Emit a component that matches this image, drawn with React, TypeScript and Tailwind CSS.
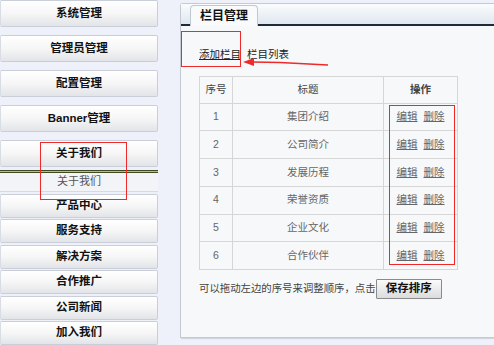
const font = { fontFamily: '"Liberation Sans", "Noto Sans CJK SC", sans-serif' };

const topMenu = ['系统管理', '管理员管理', '配置管理', 'Banner管理', '关于我们'];
const lowerMenu = ['产品中心', '服务支持', '解决方案', '合作推广', '公司新闻', '加入我们'];
const rows = ['集团介绍', '公司简介', '发展历程', '荣誉资质', '企业文化', '合作伙伴'];

function MenuButton({ label, tall }: { label: string; tall?: boolean }) {
  return (
    <div
      className={`flex items-center justify-center rounded-[2px] border border-[#c9ced8] border-l-[#d8dce4] bg-gradient-to-b from-white via-[#f6f6f6] to-[#e2e4e8] text-[11.5px] font-bold text-[#111] shadow-[inset_0_1px_0_#fff] ${
        tall ? 'h-[27px]' : 'h-[24px]'
      }`}
    >
      {label}
    </div>
  );
}

export default function App() {
  return (
    <div className="relative flex h-[345px] w-[494px] overflow-hidden bg-[#eef1f9]" style={font}>
      {/* sidebar */}
      <div className="flex w-[158px] shrink-0 flex-col">
        <div className="flex flex-col gap-[8px]">
          {topMenu.map((m) => (
            <MenuButton key={m} label={m} tall />
          ))}
        </div>
        <div className="mt-[3px] h-[4px] bg-gradient-to-b from-[#111] via-[#b5d21c] to-[#111]" />
        <div className="flex h-[27px] items-center justify-center border-b border-[#d6dae2] bg-[#f3f4f7] text-[11px] text-[#555]">
          关于我们
        </div>
        <div className="mt-[2px] flex flex-col gap-[1.5px]">
          {lowerMenu.map((m) => (
            <MenuButton key={m} label={m} />
          ))}
        </div>
      </div>

      {/* panel */}
      <div className="ml-[22px] mt-[3px] flex h-[335px] flex-1 flex-col rounded-tl-[3px] border border-r-0 border-[#c4cad4] bg-[#f7f8fa] shadow-[1px_1px_1px_#cfd4dc]">
        <div className="flex h-[22px] items-end border-b-2 border-[#1e2a38] bg-gradient-to-b from-[#fbfcfd] to-[#dfe7ef] pl-[9px]">
          <div className="-mb-[2px] flex h-[21px] w-[68px] items-center justify-center rounded-t-[4px] border border-b-0 border-[#c0c8d2] bg-[#f9fafb] text-[12px] font-bold text-[#111]">
            栏目管理
          </div>
        </div>

        <div className="flex flex-col pl-[18px]">
          <div className="mt-[21px] flex gap-[6px] text-[10.5px] text-[#222]">
            <span className="underline">添加栏目</span>
            <span>栏目列表</span>
          </div>

          <table className="mt-[13px] w-[259px] border-collapse text-[10.5px] text-[#666]">
            <thead>
              <tr className="h-[27px] text-[#444]">
                <th className="w-[33px] border border-[#d6d6d6] font-normal">序号</th>
                <th className="w-[151px] border border-[#d6d6d6] font-normal">标题</th>
                <th className="border border-[#d6d6d6] font-bold">操作</th>
              </tr>
            </thead>
            <tbody>
              {rows.map((r, i) => (
                <tr key={r} className="h-[27.7px]">
                  <td className="border border-[#d6d6d6] text-center">{i + 1}</td>
                  <td className="border border-[#d6d6d6] text-center">{r}</td>
                  <td className="border border-[#d6d6d6] text-center">
                    <span className="underline">编辑</span>
                    <span className="ml-[6px] underline">删除</span>
                  </td>
                </tr>
              ))}
            </tbody>
          </table>

          <div className="mt-[9px] flex items-center text-[10.4px] text-[#444]">
            <span>可以拖动左边的序号来调整顺序，点击</span>
            <button className="h-[20px] w-[66px] rounded-[1px] border border-[#8a8a8a] bg-gradient-to-b from-[#fafafa] to-[#dcdcdc] text-[11.5px] font-bold text-[#111]">
              保存排序
            </button>
          </div>
        </div>
      </div>

      {/* annotations */}
      <div className="pointer-events-none absolute z-10 left-[40px] top-[142px] h-[58px] w-[87px] border border-[#ee2a2a]" />
      <div className="pointer-events-none absolute z-10 left-[181px] top-[31px] h-[36px] w-[60px] border border-[#ee2a2a]" />
      <svg className="pointer-events-none absolute z-10 left-[389px] top-[105px]" width="66" height="160" viewBox="0 0 66 160">
        <rect x="0.5" y="0.5" width="65" height="159" fill="none" stroke="#f02828" strokeWidth="1" />
      </svg>
      <svg className="pointer-events-none absolute z-10 left-[240px] top-[56px]" width="92" height="14" viewBox="0 0 92 14">
        <path d="M12 6 L40 6.5 L88 9" stroke="#ee2a2a" strokeWidth="1.3" fill="none" />
        <path d="M3 6 L14 2 L14 10 Z" fill="#ee2a2a" />
      </svg>
    </div>
  );
}
